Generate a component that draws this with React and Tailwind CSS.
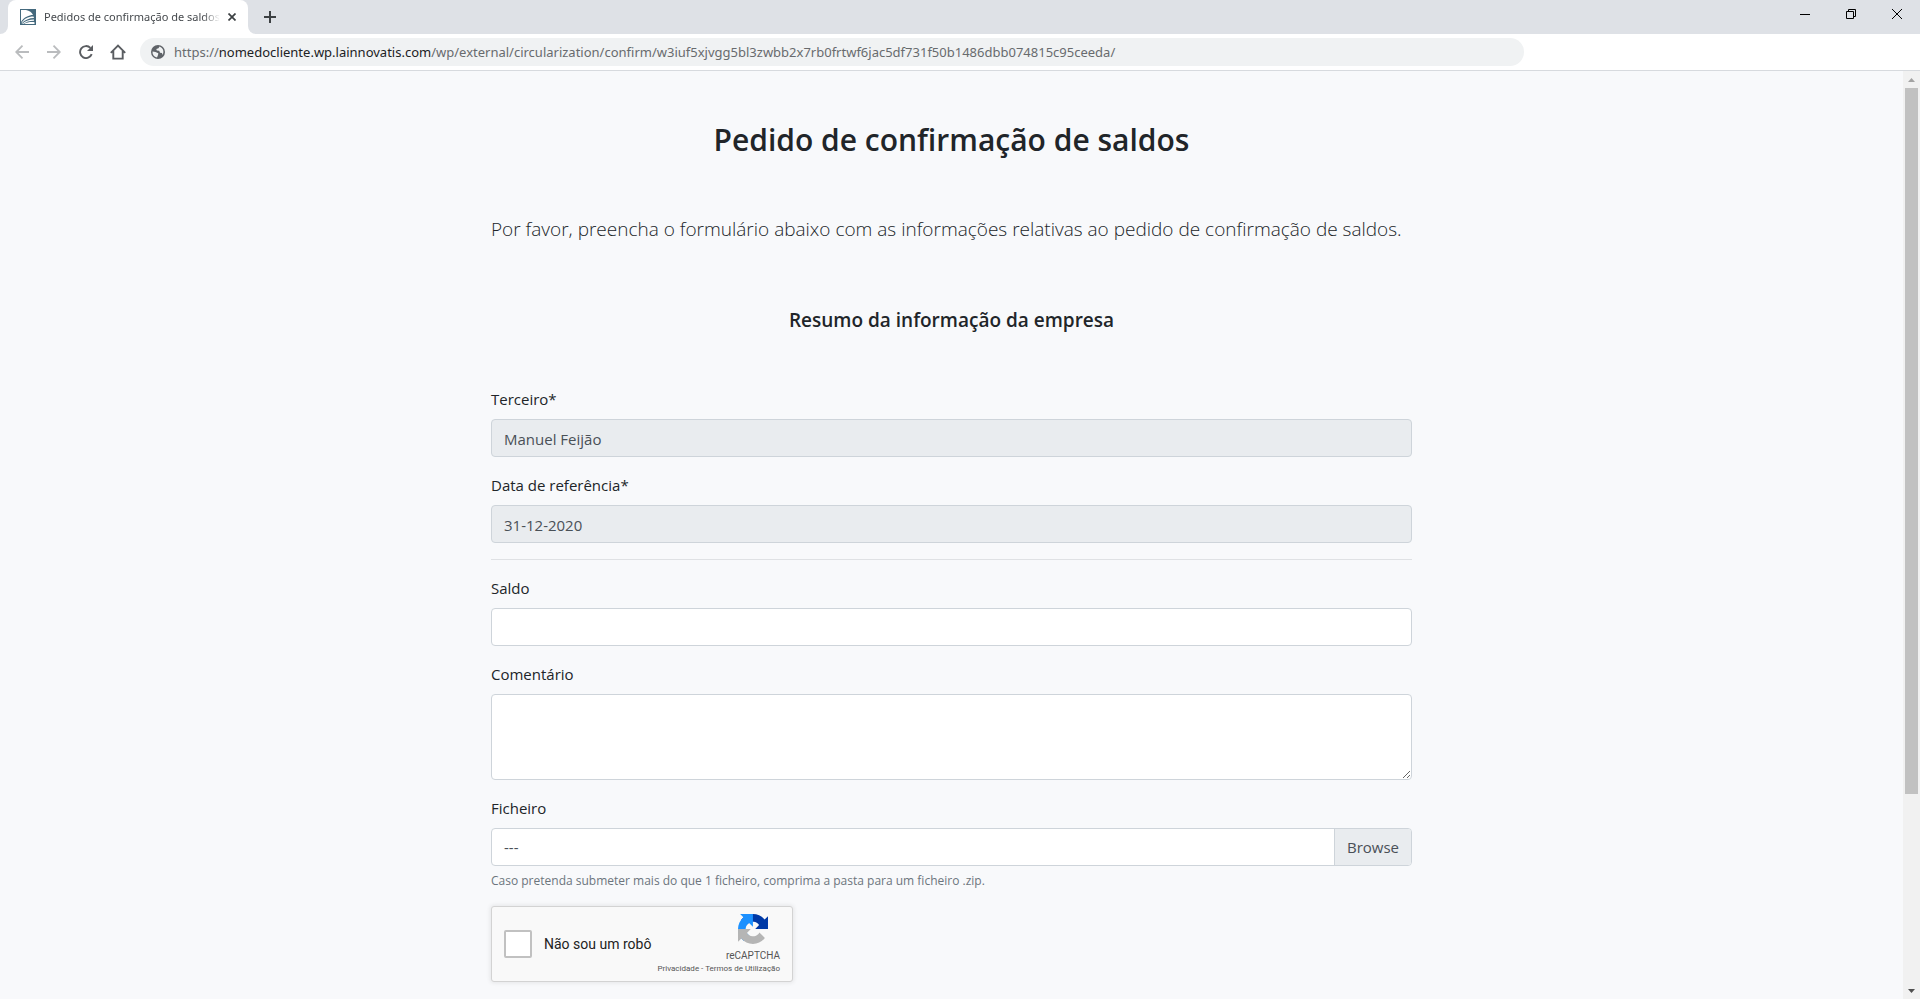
import { useState } from "react";

const inputClass = "block w-full h-[38px] px-3 pt-0.5 rounded border border-[#ced4da] text-[15px] text-[#495057] outline-none"

function Field({ id, label, children }) {
    return (
        <div className="mb-4">
            <label htmlFor={id} className="block mb-2 text-[15px] leading-6">{label}</label>
            {children}
        </div>
    )
}

function TabBar() {
    return (
        <div className="flex items-start justify-between h-[34px] shrink-0 bg-[#dee1e6]">
            <div className="flex h-full">
                <div className="w-2 bg-white">
                    <div className="w-full h-full rounded-br-lg bg-[#dee1e6]"></div>
                </div>
                <div className="flex items-center w-60 px-3 rounded-t-lg bg-white">
                    <svg className="shrink-0" width="16" height="16" viewBox="0 0 16 16">
                        <rect width="16" height="16" fill="#44697d" />
                        <path d="M1 1 H6 C9.5 1.5 12 3.5 13 6 C9 6 4 8 1 13 Z" fill="#fff" />
                        <path d="M1.5 14 C4 10 8 7.6 13.5 7.6 L14 9 C9 9 5 11 1.5 14.4 Z" fill="#fff" />
                        <path d="M2 14.8 C6 11.3 10 10.3 14 10.4 V11.7 C10 11.6 6 12.8 3 15 Z" fill="#fff" />
                        <path d="M4 15 C7 13.2 11 12.8 14.5 13.2 V15 Z" fill="#fff" />
                    </svg>
                    <span className="flex-1 ml-2 mr-2 overflow-hidden whitespace-nowrap font-['Noto_Sans',sans-serif] text-[11px] leading-4 text-[#45494d] mask-r-from-90%">Pedidos de confirmação de saldos</span>
                    <button type="button" aria-label="Fechar separador">
                        <svg width="8" height="8" viewBox="0 0 8 8" stroke="#3c4043" strokeWidth="1.7">
                            <path d="M0.5 0.5 L7.5 7.5 M7.5 0.5 L0.5 7.5" />
                        </svg>
                    </button>
                </div>
                <div className="w-2 bg-white">
                    <div className="w-full h-full rounded-bl-lg bg-[#dee1e6]"></div>
                </div>
                <button type="button" aria-label="Novo separador" className="px-2">
                    <svg width="12" height="12" viewBox="0 0 12 12" stroke="#3c4043" strokeWidth="2">
                        <path d="M6 0 V12 M0 6 H12" />
                    </svg>
                </button>
            </div>
            <div className="flex h-7">
                <button type="button" aria-label="Minimizar" className="flex items-center justify-center w-[46px]">
                    <svg width="10" height="10" viewBox="0 0 10 10"><rect y="5" width="10" height="1" /></svg>
                </button>
                <button type="button" aria-label="Restaurar" className="flex items-center justify-center w-[46px]">
                    <svg width="10" height="10" viewBox="0 0 10 10" fill="none" stroke="#000">
                        <path d="M0.5 2.5 H7.5 V9.5 H0.5 Z M2.5 2.5 V0.5 H9.5 V7.5 H7.5" />
                    </svg>
                </button>
                <button type="button" aria-label="Fechar" className="flex items-center justify-center w-[46px]">
                    <svg width="10" height="10" viewBox="0 0 10 10" stroke="#000">
                        <path d="M0 0 L10 10 M10 0 L0 10" />
                    </svg>
                </button>
            </div>
        </div>
    )
}

function Toolbar() {
    return (
        <div className="flex items-center h-[37px] shrink-0 pl-1.5 bg-white border-b border-[#d7dade]">
            <button type="button" aria-label="Recuar" className="flex items-center justify-center w-8">
                <svg width="14" height="14" viewBox="0 0 14 14" fill="none" stroke="#babcbe" strokeWidth="1.8">
                    <path d="M14 7 H1.5 M7.5 0.7 L1.2 7 L7.5 13.3" />
                </svg>
            </button>
            <button type="button" aria-label="Avançar" className="flex items-center justify-center w-8">
                <svg width="14" height="14" viewBox="0 0 14 14" fill="none" stroke="#babcbe" strokeWidth="1.8">
                    <path d="M0 7 H12.5 M6.5 0.7 L12.8 7 L6.5 13.3" />
                </svg>
            </button>
            <button type="button" aria-label="Recarregar" className="flex items-center justify-center w-8">
                <svg width="14" height="14" viewBox="0 0 14 14">
                    <path d="M12.7 9.2 A6 6 0 1 1 11.4 2.9" fill="none" stroke="#5a5d61" strokeWidth="1.9" />
                    <path d="M14 0 V6 H8 Z" fill="#5a5d61" />
                </svg>
            </button>
            <button type="button" aria-label="Página inicial" className="flex items-center justify-center w-8">
                <svg width="16" height="16" viewBox="0 0 16 16" fill="none" stroke="#5a5d61" strokeWidth="1.9">
                    <path d="M3.3 7 V14.6 H12.7 V7 M0.8 8.8 L8 1.6 L15.2 8.8" />
                </svg>
            </button>
            <div className="flex items-center w-[72.3%] h-7 ml-1.5 pl-[11px] rounded-full bg-[#f0f2f3]">
                <svg className="shrink-0" width="14" height="14" viewBox="0 0 14 14">
                    <circle cx="7" cy="7" r="7" fill="#5f6368" />
                    <path d="M1.5 6.5 L4.5 7 L7.3 8.2 L7 10 L6 12.5 C3 12 1.3 9.5 1.5 6.5 Z" fill="#f0f2f3" />
                    <path d="M8.5 1.6 L7.5 3.2 L5.3 4 L5.8 5.5 L8.2 5.8 L9 7.8 L11 8 L11.6 10 C13.3 7 12.4 3 8.5 1.6 Z" fill="#f0f2f3" />
                </svg>
                <div role="textbox" aria-label="Endereço" contentEditable suppressContentEditableWarning spellCheck={false} className="ml-[9px] whitespace-nowrap font-['Noto_Sans',sans-serif] text-[13px] leading-5 text-[#686b6e] outline-none">
                    https://<span className="text-[#202124]">nomedocliente.wp.lainnovatis.com</span>/wp/external/circularization/confirm/w3iuf5xjvgg5bl3zwbb2x7rb0frtwf6jac5df731f50b1486dbb074815c95ceeda/
                </div>
            </div>
        </div>
    )
}

function Scrollbar() {
    return (
        <div className="flex flex-col w-[17px] shrink-0 bg-[#f1f1f1]">
            <button type="button" aria-label="Subir" className="flex items-center justify-center h-[17px] shrink-0">
                <svg width="7" height="4" viewBox="0 0 7 4"><path d="M3.5 0 L7 4 H0 Z" fill="#a3a3a3" /></svg>
            </button>
            <div className="flex-1 px-0.5">
                <div className="h-[79%] bg-[#c1c1c1]"></div>
            </div>
            <button type="button" aria-label="Descer" className="flex items-center justify-center h-[17px] shrink-0">
                <svg width="7" height="4" viewBox="0 0 7 4"><path d="M0 0 H7 L3.5 4 Z" fill="#505050" /></svg>
            </button>
        </div>
    )
}

function Recaptcha() {
    return (
        <div className="flex justify-between w-[302px] h-[76px] rounded-[3px] border border-[#d3d3d3] bg-[#f9f9f9] shadow-[0_0_4px_1px_rgba(0,0,0,0.08)] font-[Roboto,sans-serif] text-[#222]">
            <div className="flex items-center pl-3">
                <input id="robot" type="checkbox" className="appearance-none w-7 h-7 rounded-xs border-2 border-[#c1c1c1] bg-white checked:bg-[#4285f4]" />
                <label htmlFor="robot" className="ml-3 text-sm leading-4">Não sou um robô</label>
            </div>
            <div className="flex flex-col items-end pt-[7px] pr-3 text-[#555]">
                <div className="flex flex-col items-center">
                    <svg width="30" height="30" viewBox="0 0 64 64">
                        <path fill="#0039a6" d="M64 31.955l-.033-1.37V4.687l-7.16 7.16C50.948 4.674 42.033.093 32.05.093c-10.4 0-19.622 4.96-25.458 12.64l11.736 11.86a15.55 15.55 0 0 1 4.754-5.334c2.05-1.6 4.952-2.906 8.968-2.906.485 0 .86.057 1.135.163 4.976.393 9.288 3.14 11.828 7.124l-8.307 8.307L64 31.953" />
                        <path fill="#1c91ff" d="M31.862.094l-1.37.033H4.594l7.16 7.16C4.58 13.147 0 22.06 0 32.046c0 10.4 4.96 19.622 12.64 25.458L24.5 45.768a15.55 15.55 0 0 1-5.334-4.754c-1.6-2.05-2.906-4.952-2.906-8.968 0-.485.057-.86.163-1.135.393-4.976 3.14-9.288 7.124-11.828l8.307 8.307L31.86.095" />
                        <path fill="#b5b5b5" d="M.001 32.045l.033 1.37v25.898l7.16-7.16c5.86 7.173 14.774 11.754 24.76 11.754 10.4 0 19.622-4.96 25.458-12.64l-11.736-11.86a15.55 15.55 0 0 1-4.754 5.334c-2.05 1.6-4.952 2.906-8.968 2.906-.485 0-.86-.057-1.135-.163-4.976-.393-9.288-3.14-11.828-7.124l8.307-8.307c-10.522.04-22.4.066-27.295-.005" />
                    </svg>
                    <span className="mt-1.5 text-[10px] leading-3">reCAPTCHA</span>
                </div>
                <div className="mt-0.5 text-[8px] leading-[10px] whitespace-nowrap">
                    <a href="#privacidade">Privacidade</a> - <a href="#termos">Termos de Utilização</a>
                </div>
            </div>
        </div>
    )
}

function App() {
    const [fileName, setFileName] = useState("---")

    const handleFile = (e) => {
        const file = e.target.files[0]
        setFileName(file ? file.name : "---")
    }

    return (
        <div className="flex flex-col h-screen overflow-hidden font-['Open_Sans','Noto_Sans',sans-serif] text-[#212529]">
            <TabBar />
            <Toolbar />
            <div className="flex flex-1 min-h-0">
                <main className="flex-1 overflow-hidden bg-[#f8f9fb]">
                    <div className="max-w-[921px] mx-auto">
                        <h2 className="pt-[50px] text-center text-[30px] leading-[38px] font-semibold">Pedido de confirmação de saldos</h2>
                        <p className="mt-[55px] text-[19px] leading-[30px] font-light">Por favor, preencha o formulário abaixo com as informações relativas ao pedido de confirmação de saldos.</p>
                        <h5 className="mt-16 text-center text-[19px] leading-6 font-semibold">Resumo da informação da empresa</h5>

                        <form className="mt-[55px]">
                            <Field id="terceiro" label="Terceiro*">
                                <input id="terceiro" type="text" readOnly defaultValue="Manuel Feijão" className={`${inputClass} bg-[#e9ecef]`} />
                            </Field>
                            <Field id="data" label="Data de referência*">
                                <input id="data" type="text" readOnly defaultValue="31-12-2020" className={`${inputClass} bg-[#e9ecef]`} />
                            </Field>
                            <hr className="mb-4 border-[#dfe1e4]" />
                            <Field id="saldo" label="Saldo">
                                <input id="saldo" type="text" className={`${inputClass} bg-white`} />
                            </Field>
                            <Field id="comentario" label="Comentário">
                                <textarea id="comentario" className="block w-full h-[86px] px-3 py-1.5 rounded border border-[#ced4da] bg-white text-[15px] leading-6 text-[#495057] outline-none resize-y"></textarea>
                            </Field>
                            <Field id="ficheiro" label="Ficheiro">
                                <label className="flex h-[38px] rounded border border-[#ced4da] bg-white overflow-hidden text-[15px] leading-9 text-[#495057]">
                                    <input id="ficheiro" type="file" onChange={handleFile} className="sr-only" />
                                    <span className="flex-1 px-3">{fileName}</span>
                                    <span className="px-3 border-l border-[#ced4da] bg-[#e9ecef]">Browse</span>
                                </label>
                                <small className="block mt-1.5 text-xs leading-[18px] text-[#6c757d]">Caso pretenda submeter mais do que 1 ficheiro, comprima a pasta para um ficheiro .zip.</small>
                            </Field>
                            <Recaptcha />
                        </form>
                    </div>
                </main>
                <Scrollbar />
            </div>
        </div>
    )
}

export default App
